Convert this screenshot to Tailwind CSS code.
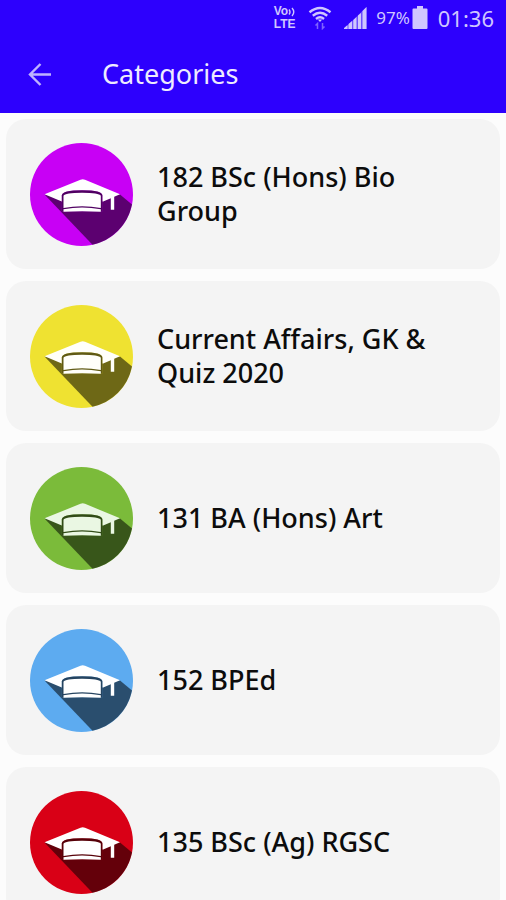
<!DOCTYPE html>
<html lang="en">
<head>
<meta charset="utf-8">
<meta name="viewport" content="width=device-width, initial-scale=1">
<title>Categories</title>
<script src="https://cdn.jsdelivr.net/npm/@tailwindcss/browser@4"></script>
</head>
<body class="flex h-screen flex-col overflow-hidden bg-[#fcfcfc] font-['Noto_Sans',sans-serif] text-[#0c0c0c]">

<svg class="hidden" aria-hidden="true">
  <defs>
    <symbol id="cap" viewBox="0 0 103 103">
      <circle cx="51.5" cy="51.5" r="51.5" fill="currentColor"/>
      <path d="M14.5 51.5L62.5 101.8A51.5 51.5 0 0 0 102 61.6L90 51.5Z" fill="#000" fill-opacity=".54"/>
      <path d="M14.5 51.3L50.5 36.8Q52.7 35.8 55 36.8L90 51.3L84.2 53.8V66.8H80.8V55.2L73.2 58.6L31.8 58.6Z" fill="var(--hat)"/>
      <path d="M31.8 68.5V52.5Q32 47.3 52.2 47.3Q72.4 47.3 72.4 52.5V68.5Z" fill="currentColor"/>
      <path d="M31.8 68.5V52.5Q32 47.3 52.2 47.3Q72.4 47.3 72.4 52.5V68.5Z" fill="#000" fill-opacity=".6"/>
      <path d="M33.5 65V52.8Q35 49.7 52 49.7Q69 49.7 70.8 52.8V65Q52 61.6 33.5 65Z" fill="var(--hat)"/>
      <path d="M33.5 68.7V66.2Q52 62.6 70.8 66.2V68.7Q52 67.6 33.5 68.7Z" fill="var(--hat)"/>
    </symbol>
  </defs>
</svg>

<header class="shrink-0 bg-[#2d00fd]">
  <div class="flex h-9 items-center justify-end pr-3 text-[#cfc6ff]">
    <div class="mr-3 font-['Liberation_Sans',sans-serif] text-[12px] leading-[13px] font-bold">
      <div class="flex items-center">Vo<svg class="h-3 w-2" viewBox="0 0 8 12" fill="none" stroke="currentColor" stroke-width="1.4" aria-hidden="true"><path d="M1 3.5q2 2.5 0 5M4 2q3.5 4 0 8"/></svg></div>
      <div>LTE</div>
    </div>
    <svg class="mr-3 h-6 w-6" viewBox="0 0 24 24" role="img" aria-label="Wi-Fi" fill="none" stroke="currentColor" stroke-width="2.4">
      <path d="M1.5 6.3Q12-2.2 22.5 6.3M4.8 9.7Q12 3.8 19.2 9.7M8 13Q12 9.6 16 13"/>
      <path d="M12 16L9.8 13.6H14.2Z" fill="currentColor" stroke="none"/>
      <path d="M9.5 23V17.5L7.5 19.5M14.5 17V22.5L16.5 20.5" stroke-width="1.5" opacity=".5"/>
    </svg>
    <svg class="mr-2 h-6 w-6" viewBox="0 0 24 24" role="img" aria-label="Signal strength" fill="currentColor">
      <path d="M0 23V22L3.5 19V23ZM4.5 23V18L8 15V23ZM9.3 23V14L12.5 11V23ZM14 23V9.5L17 7V23ZM18.5 23V5L22.5 1V23Z"/>
      <path d="M0 23L22.5 1V23Z" opacity=".4"/>
    </svg>
    <span class="mr-0.5 text-[17px]">97%</span>
    <svg class="mr-2.5 h-6 w-4" viewBox="0 0 16 24" role="img" aria-label="Battery" fill="currentColor">
      <path d="M5 0H11V2.5H14.5Q15.5 2.5 15.5 3.5V22Q15.5 23 14.5 23H1.5Q.5 23 .5 22V3.5Q.5 2.5 1.5 2.5H5Z"/>
    </svg>
    <time class="text-[22px]">01:36</time>
  </div>
  <div class="flex h-[77px] items-center pl-7">
    <button type="button" class="mr-[50px] text-[#bfb2ff]" aria-label="Back">
      <svg class="h-6 w-6" viewBox="0 0 24 24" fill="none" stroke="currentColor" stroke-width="2.4"><path d="M23 11.5H2M12.5 1L2 11.5L12.5 22"/></svg>
    </button>
    <h1 class="text-[27px] text-[#eeebff]">Categories</h1>
  </div>
</header>

<main class="min-h-0 flex-1 overflow-y-auto px-1.5 pt-1.5 [scrollbar-width:none]">
  <ul class="flex flex-col gap-3 text-[27px] leading-[34px] font-medium">
    <li><a href="#" class="flex h-[150px] items-center gap-6 rounded-[20px] bg-[#f4f4f4] pr-12 pl-6"><svg class="size-[103px] shrink-0 text-[#c800f5] [--hat:#fff]" aria-hidden="true"><use href="#cap"/></svg><span>182 BSc (Hons) Bio Group</span></a></li>
    <li><a href="#" class="flex h-[150px] items-center gap-6 rounded-[20px] bg-[#f4f4f4] pr-12 pl-6"><svg class="size-[103px] shrink-0 text-[#efe231] [--hat:#fffffa]" aria-hidden="true"><use href="#cap"/></svg><span>Current Affairs, GK &amp; Quiz 2020</span></a></li>
    <li><a href="#" class="flex h-[150px] items-center gap-6 rounded-[20px] bg-[#f4f4f4] pr-12 pl-6"><svg class="size-[103px] shrink-0 text-[#7bbb3a] [--hat:#eaf7e3]" aria-hidden="true"><use href="#cap"/></svg><span>131 BA (Hons) Art</span></a></li>
    <li><a href="#" class="flex h-[150px] items-center gap-6 rounded-[20px] bg-[#f4f4f4] pr-12 pl-6"><svg class="size-[103px] shrink-0 text-[#5dabf0] [--hat:#fff]" aria-hidden="true"><use href="#cap"/></svg><span>152 BPEd</span></a></li>
    <li><a href="#" class="flex h-[150px] items-center gap-6 rounded-[20px] bg-[#f4f4f4] pr-12 pl-6"><svg class="size-[103px] shrink-0 text-[#d90016] [--hat:#fff]" aria-hidden="true"><use href="#cap"/></svg><span>135 BSc (Ag) RGSC</span></a></li>
  </ul>
</main>
</body>
</html>
